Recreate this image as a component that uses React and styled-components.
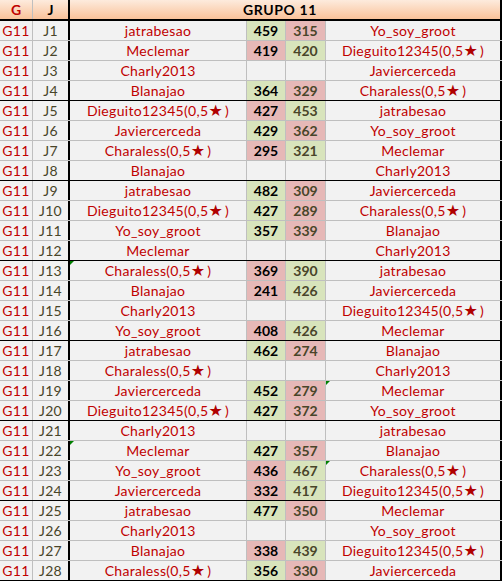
import styled, { createGlobalStyle, css } from 'styled-components';

const GlobalStyle = createGlobalStyle`
	html, body {
		margin: 0;
		padding: 0;
		background: #ffffff;
	}
	body {
		font-family: Lato, 'Open Sans', sans-serif;
		font-size: 14px;
	}
`;

const STAR = '(0,5★)';

const matches = [
	['jatrabesao', 459, 315, 'Yo_soy_groot'],
	['Meclemar', 419, 420, `Dieguito12345${STAR}`],
	['Charly2013', null, null, 'Javiercerceda'],
	['Blanajao', 364, 329, `Charaless${STAR}`],
	[`Dieguito12345${STAR}`, 427, 453, 'jatrabesao'],
	['Javiercerceda', 429, 362, 'Yo_soy_groot'],
	[`Charaless${STAR}`, 295, 321, 'Meclemar'],
	['Blanajao', null, null, 'Charly2013'],
	['jatrabesao', 482, 309, 'Javiercerceda'],
	[`Dieguito12345${STAR}`, 427, 289, `Charaless${STAR}`],
	['Yo_soy_groot', 357, 339, 'Blanajao'],
	['Meclemar', null, null, 'Charly2013'],
	[`Charaless${STAR}`, 369, 390, 'jatrabesao', 'left'],
	['Blanajao', 241, 426, 'Javiercerceda'],
	['Charly2013', null, null, `Dieguito12345${STAR}`],
	['Yo_soy_groot', 408, 426, 'Meclemar'],
	['jatrabesao', 462, 274, 'Blanajao'],
	[`Charaless${STAR}`, null, null, 'Charly2013'],
	['Javiercerceda', 452, 279, 'Meclemar', 'right'],
	[`Dieguito12345${STAR}`, 427, 372, 'Yo_soy_groot'],
	['Charly2013', null, null, 'jatrabesao'],
	['Meclemar', 427, 357, 'Blanajao', 'left'],
	['Yo_soy_groot', 436, 467, `Charaless${STAR}`, 'right'],
	['Javiercerceda', 332, 417, `Dieguito12345${STAR}`],
	['jatrabesao', 477, 350, 'Meclemar'],
	['Charly2013', null, null, 'Yo_soy_groot'],
	['Blanajao', 338, 439, `Dieguito12345${STAR}`],
	[`Charaless${STAR}`, 356, 330, 'Javiercerceda'],
];

const Sheet = styled.div`
	width: 502px;
	display: flex;
	flex-direction: column;
`;

const HeaderRow = styled.div`
	display: grid;
	grid-template-columns: 33px 37px 1fr;
	height: 21px;
	background: linear-gradient(#fdebdd, #f9c29a);
	border-bottom: 2px solid #000;
	box-sizing: border-box;
`;

const HeadCell = styled.div`
	display: flex;
	align-items: center;
	justify-content: center;
	font-weight: 700;
	font-size: 14px;
	color: ${(p) => p.$color || '#000'};
	border-right: ${(p) => p.$thick ? '2px solid #000' : '1px solid #bfbfbf'};
	letter-spacing: ${(p) => p.$spaced ? '0.6px' : '0'};
	${(p) => p.$last && css`
		border-right: 2px solid #000;
		padding-right: 10px;
	`}
`;

const Row = styled.div`
	display: grid;
	grid-template-columns: 33px 37px 177px 39px 40px 176px;
	height: 20px;
	box-sizing: border-box;
	border-bottom: 1px solid ${(p) => p.$groupEnd ? '#000' : '#bfbfbf'};
	background: #f2f2f2;
`;

const Cell = styled.div`
	position: relative;
	display: flex;
	align-items: center;
	justify-content: center;
	border-right: 1px solid #bfbfbf;
	white-space: nowrap;
	font-size: 14px;
	line-height: 19px;
	letter-spacing: 0.3px;
	color: #c00000;
`;

const RoundCell = styled(Cell)`
	color: #494529;
	border-right: 2px solid #000;
`;

const NameCell = styled(Cell)`
	${(p) => p.$last && css`
		border-right: 2px solid #000;
	`}
`;

const ScoreCell = styled(Cell)`
	font-weight: 700;
	letter-spacing: 0;
	color: ${(p) => p.$home ? '#000' : '#494529'};
	background: ${(p) => p.$win === undefined ? '#f2f2f2' : p.$win ? '#d8e4bc' : '#e6b8b7'};
`;

const Flag = styled.span`
	position: absolute;
	top: 0;
	left: 0;
	width: 0;
	height: 0;
	border-top: 4px solid #008000;
	border-right: 4px solid transparent;
`;

const Star = styled.span`
	font-family: 'DejaVu Sans', sans-serif;
	font-size: 16px;
	line-height: 16px;
	margin-right: 2px;
	color: #b00000;
`;

function Name({ text }) {
	const i = text.indexOf('★');
	if (i < 0) return text;
	return (
		<span>
			{text.slice(0, i)}
			<Star>★</Star>
			{text.slice(i + 1)}
		</span>
	);
}

export default function App() {
	return (
		<>
			<GlobalStyle />
			<Sheet>
				<HeaderRow>
					<HeadCell $color='#c00000'>G</HeadCell>
					<HeadCell $thick>J</HeadCell>
					<HeadCell $last $spaced>GRUPO 11</HeadCell>
				</HeaderRow>
				{matches.map(([home, s1, s2, away, flag], i) => {
					const played = s1 !== null;
					return (
						<Row key={i} $groupEnd={i % 4 === 3}>
							<Cell>G11</Cell>
							<RoundCell>J{i + 1}</RoundCell>
							<NameCell>
								{flag === 'left' && <Flag />}
								<Name text={home} />
							</NameCell>
							<ScoreCell $home $win={played ? s1 > s2 : undefined}>{s1}</ScoreCell>
							<ScoreCell $win={played ? s2 > s1 : undefined}>{s2}</ScoreCell>
							<NameCell $last>
								{flag === 'right' && <Flag />}
								<Name text={away} />
							</NameCell>
						</Row>
					);
				})}
			</Sheet>
		</>
	);
}
